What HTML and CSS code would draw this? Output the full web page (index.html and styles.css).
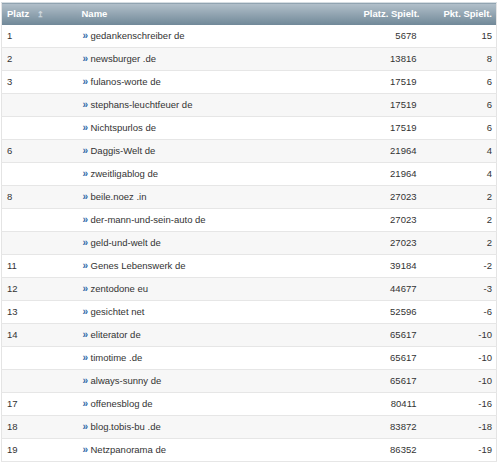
FILE: index.html
```html
<!DOCTYPE html>
<html>
<head>
<meta charset="utf-8">
<link rel="stylesheet" href="styles.css">
</head>
<body>
<table class="ranking">
  <thead>
    <tr>
      <th class="c-platz">Platz <span class="sort">&#8613;</span></th>
      <th class="c-name">Name</th>
      <th class="c-num1">Platz. Spielt.</th>
      <th class="c-num2">Pkt. Spielt.</th>
    </tr>
  </thead>
  <tbody>
    <tr><td class="c-platz">1</td><td class="c-name"><span class="arr">»</span>gedankenschreiber de</td><td class="c-num1">5678</td><td class="c-num2">15</td></tr>
    <tr><td class="c-platz">2</td><td class="c-name"><span class="arr">»</span>newsburger .de</td><td class="c-num1">13816</td><td class="c-num2">8</td></tr>
    <tr><td class="c-platz">3</td><td class="c-name"><span class="arr">»</span>fulanos-worte de</td><td class="c-num1">17519</td><td class="c-num2">6</td></tr>
    <tr><td class="c-platz"></td><td class="c-name"><span class="arr">»</span>stephans-leuchtfeuer de</td><td class="c-num1">17519</td><td class="c-num2">6</td></tr>
    <tr><td class="c-platz"></td><td class="c-name"><span class="arr">»</span>Nichtspurlos de</td><td class="c-num1">17519</td><td class="c-num2">6</td></tr>
    <tr><td class="c-platz">6</td><td class="c-name"><span class="arr">»</span>Daggis-Welt de</td><td class="c-num1">21964</td><td class="c-num2">4</td></tr>
    <tr><td class="c-platz"></td><td class="c-name"><span class="arr">»</span>zweitligablog de</td><td class="c-num1">21964</td><td class="c-num2">4</td></tr>
    <tr><td class="c-platz">8</td><td class="c-name"><span class="arr">»</span>beile.noez .in</td><td class="c-num1">27023</td><td class="c-num2">2</td></tr>
    <tr><td class="c-platz"></td><td class="c-name"><span class="arr">»</span>der-mann-und-sein-auto de</td><td class="c-num1">27023</td><td class="c-num2">2</td></tr>
    <tr><td class="c-platz"></td><td class="c-name"><span class="arr">»</span>geld-und-welt de</td><td class="c-num1">27023</td><td class="c-num2">2</td></tr>
    <tr><td class="c-platz">11</td><td class="c-name"><span class="arr">»</span>Genes Lebenswerk de</td><td class="c-num1">39184</td><td class="c-num2">-2</td></tr>
    <tr><td class="c-platz">12</td><td class="c-name"><span class="arr">»</span>zentodone eu</td><td class="c-num1">44677</td><td class="c-num2">-3</td></tr>
    <tr><td class="c-platz">13</td><td class="c-name"><span class="arr">»</span>gesichtet net</td><td class="c-num1">52596</td><td class="c-num2">-6</td></tr>
    <tr><td class="c-platz">14</td><td class="c-name"><span class="arr">»</span>eliterator de</td><td class="c-num1">65617</td><td class="c-num2">-10</td></tr>
    <tr><td class="c-platz"></td><td class="c-name"><span class="arr">»</span>timotime .de</td><td class="c-num1">65617</td><td class="c-num2">-10</td></tr>
    <tr><td class="c-platz"></td><td class="c-name"><span class="arr">»</span>always-sunny de</td><td class="c-num1">65617</td><td class="c-num2">-10</td></tr>
    <tr><td class="c-platz">17</td><td class="c-name"><span class="arr">»</span>offenesblog de</td><td class="c-num1">80411</td><td class="c-num2">-16</td></tr>
    <tr><td class="c-platz">18</td><td class="c-name"><span class="arr">»</span>blog.tobis-bu .de</td><td class="c-num1">83872</td><td class="c-num2">-18</td></tr>
    <tr><td class="c-platz">19</td><td class="c-name"><span class="arr">»</span>Netzpanorama de</td><td class="c-num1">86352</td><td class="c-num2">-19</td></tr>
  </tbody>
</table>
</body>
</html>
```

FILE: styles.css
```css
html, body {
  margin: 0;
  padding: 0;
  background: #ffffff;
}
body {
  padding: 2px 3px 0 1px;
  font-family: "Liberation Sans", Arial, sans-serif;
  font-size: 9.5px;
  color: #333333;
}
.ranking {
  width: 496px;
  border-collapse: collapse;
  table-layout: fixed;
  border-left: 1px solid #e4e4e4;
  border-right: 1px solid #e4e4e4;
}
.ranking th {
  height: 22px;
  padding: 0 6px;
  color: #ffffff;
  font-weight: bold;
  font-size: 9.5px;
  text-align: left;
  background: linear-gradient(#b2c0ca, #6f8797);
  border-top: 1px solid #d5dde2;
  box-sizing: border-box;
  vertical-align: middle;
}
.ranking td {
  height: 22px;
  padding: 0 6px;
  border-bottom: 1px solid #e6e6e6;
  vertical-align: middle;
  white-space: nowrap;
}
.ranking tbody tr:nth-child(even) td {
  background: #f7f7f7;
}
.c-platz { width: 74px; }
.ranking th.c-platz, .ranking td.c-platz { padding-left: 5px; }
.c-name { width: auto; }
.ranking th.c-name, .ranking td.c-name { padding-left: 6px; }
.c-num1 { width: 90px; }
.ranking th.c-num1 { text-align: right; padding-right: 4px; }
.ranking td.c-num1 { text-align: right; padding-right: 7px; }
.c-num2 { width: 73px; }
.ranking th.c-num2, .ranking td.c-num2 { text-align: right; padding-right: 4px; }
.sort {
  display: inline-block;
  margin-left: 5px;
  font-size: 8px;
  color: #e8eef2;
  opacity: 0.7;
}
.arr {
  display: inline-block;
  width: 8px;
  margin-left: 1px;
  color: #2f6aa8;
  font-weight: bold;
  font-size: 10px;
}
```
